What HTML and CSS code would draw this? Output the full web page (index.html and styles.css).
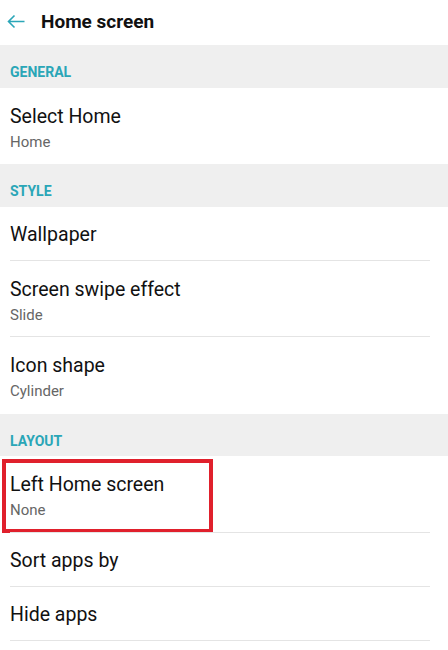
FILE: index.html
```html
<!DOCTYPE html>
<html lang="en">
<head>
  <meta charset="UTF-8">
  <title>Home screen</title>
  <meta name="viewport" content="width=device-width, initial-scale=1.0">
  <link rel="stylesheet" href="styles.css">
</head>
<body>
  <div class="header">
    <svg class="back" width="18" height="15" viewBox="0 0 18 15">
      <path d="M17.5 7.5H1.5M7.5 1.5L1.5 7.5l6 6" fill="none" stroke="#2ba6b8" stroke-width="1.6"/>
    </svg>
    <h2>Home screen</h2>
  </div>

  <div class="section">GENERAL</div>
  <div class="item">
    <div class="title">Select Home</div>
    <div class="sub">Home</div>
  </div>

  <div class="section">STYLE</div>
  <div class="item single divided">
    <div class="title">Wallpaper</div>
  </div>
  <div class="item divided">
    <div class="title">Screen swipe effect</div>
    <div class="sub">Slide</div>
  </div>
  <div class="item">
    <div class="title">Icon shape</div>
    <div class="sub">Cylinder</div>
  </div>

  <div class="section">LAYOUT</div>
  <div class="item divided marked">
    <div class="title">Left Home screen</div>
    <div class="sub">None</div>
    <!-- highlight frame drawn over the row -->
    <div class="mark"></div>
  </div>
  <div class="item single divided">
    <div class="title">Sort apps by</div>
  </div>
  <div class="item single divided">
    <div class="title">Hide apps</div>
  </div>
</body>
</html>
```

FILE: styles.css
```css
html, body {
  margin: 0;
  padding: 0;
  background: #fff;
  color: #111;
  font-family: Roboto, "Noto Sans", sans-serif;
}
.header {
  height: 45px;
  display: flex;
  align-items: center;
  padding-left: 7px;
}
.header .back {
  margin-top: -3px;
}
.header h2 {
  margin: -3px 0 0 16px;
  font-size: 19px;
  font-weight: bold;
  color: #111;
}
.section {
  background: #efefef;
  color: #2aa6b7;
  font-size: 14px;
  font-weight: bold;
  padding: 19px 10px 7.5px;
  line-height: 16px;
}
.item {
  position: relative;
  padding: 17px 10px 12.5px;
}
.item.single {
  padding: 16px 10px 14px;
}
.item.divided::after {
  content: "";
  position: absolute;
  left: 10px;
  right: 18px;
  bottom: 0;
  border-top: 1px solid #e4e4e4;
}
.title {
  font-size: 19.5px;
  line-height: 24px;
  color: #111;
}
.sub {
  margin-top: 3px;
  font-size: 15px;
  line-height: 20px;
  color: #666;
}
.mark {
  position: absolute;
  left: 2px;
  top: 3px;
  width: 203px;
  height: 66px;
  border: 4px solid #e0202c;
}
```
